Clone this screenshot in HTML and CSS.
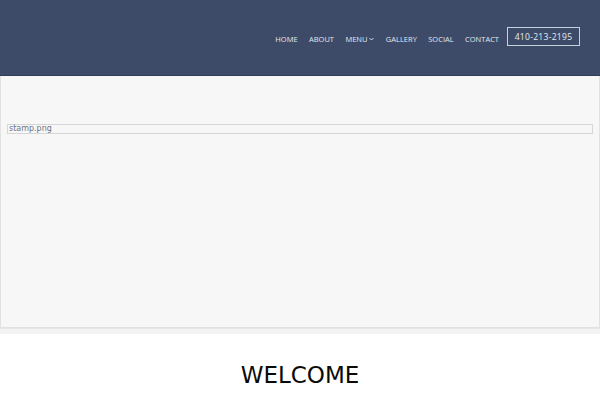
FILE: index.html
```html
<!DOCTYPE html>
<html>
<head>
<meta charset="utf-8">
<link rel="stylesheet" href="styles.css">
</head>
<body>
<header class="site-header">
  <nav class="nav">
    <a class="nav-link" href="#">HOME</a>
    <a class="nav-link" href="#">ABOUT</a>
    <a class="nav-link" href="#">MENU <svg class="chev" width="5" height="4" viewBox="0 0 5 4"><path d="M0.5 1 L2.5 3 L4.5 1" fill="none" stroke="currentColor" stroke-width="0.9"/></svg></a>
    <a class="nav-link" href="#">GALLERY</a>
    <a class="nav-link" href="#">SOCIAL</a>
    <a class="nav-link" href="#">CONTACT</a>
    <a class="phone" href="#">410-213-2195</a>
  </nav>
</header>
<section class="hero">
  <span class="broken-img">stamp.png</span>
</section>
<div class="hero-strip"></div>
<main class="welcome">
  <h1 class="welcome-title">WELCOME</h1>
</main>
</body>
</html>
```
FILE: styles.css
```css
html, body {
  margin: 0;
  padding: 0;
  background: #ffffff;
}
body {
  font-family: "DejaVu Sans", sans-serif;
  width: 600px;
  height: 400px;
  overflow: hidden;
}
.site-header {
  height: 75px;
  background: #3d4b68;
  border-bottom: 1px solid #323e57;
  display: flex;
  justify-content: flex-end;
  align-items: flex-start;
}
.nav {
  display: flex;
  align-items: center;
  margin-top: 27px;
  margin-right: 20px;
}
.nav-link {
  font-family: "Open Sans", sans-serif;
  font-size: 7.5px;
  color: #e3e7ef;
  text-decoration: none;
  margin-right: 11.4px;
  display: flex;
  align-items: center;
  gap: 2px;
  height: 19px;
  padding-top: 4px;
  box-sizing: border-box;
}
.chev {
  display: block;
}
.phone {
  font-family: "Open Sans", sans-serif;
  font-size: 8.5px;
  letter-spacing: 0.3px;
  color: #e8ebf2;
  text-decoration: none;
  border: 1px solid #c9d0dd;
  height: 17px;
  width: 71px;
  display: flex;
  align-items: center;
  justify-content: center;
  margin-left: -3.4px;
}
.hero {
  background: #f7f7f7;
  border: 1px solid #e2e2e2;
  border-top: none;
  padding-top: 48px;
  box-sizing: border-box;
  height: 252px;
}
.broken-img {
  display: block;
  margin: 0 6px;
  border: 1px solid #d6d6d6;
  height: 8px;
  font-family: "DejaVu Sans", sans-serif;
  font-size: 8px;
  line-height: 8px;
  color: #6d7383;
  padding-left: 1px;
}
.hero-strip {
  height: 5px;
  background: #f3f3f3;
  border-top: 1px solid #e6e6e6;
}
.welcome {
  text-align: center;
  padding-top: 26px;
}
.welcome-title {
  margin: 0;
  font-family: "DejaVu Sans", sans-serif;
  font-weight: normal;
  font-size: 23px;
  color: #0a0a0a;
  line-height: 30px;
}
```
